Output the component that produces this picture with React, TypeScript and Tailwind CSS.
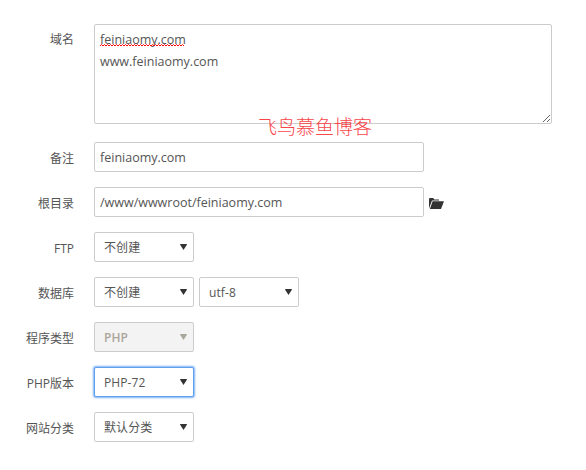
const font = "font-['Open_Sans','Noto_Sans_CJK_SC',sans-serif]";

function Row({ label, children, className = "", labelClass = "pt-[7px]" }: { label: string; children: React.ReactNode; className?: string; labelClass?: string }) {
  return (
    <div className={`flex items-start ${className}`}>
      <label className={`w-[74px] shrink-0 text-right text-[12px] leading-[20px] text-[#555] ${labelClass}`}>{label}</label>
      <div className="ml-[20px] flex items-center gap-[5px]">{children}</div>
    </div>
  );
}

function Select({ value, disabled, focus }: { value: string; disabled?: boolean; focus?: boolean }) {
  return (
    <div className="relative h-[30px] w-[100px]">
      <select
        disabled={disabled}
        defaultValue={value}
        className={`block h-[30px] w-[100px] appearance-none rounded-[2px] border pl-[9px] pt-[1px] text-[12px] tracking-[0.1px] outline-none ${font} ${
          focus
            ? "border-[#5f9ff0] bg-white text-[#555] shadow-[0_0_2px_1px_#7fb2f2]"
            : disabled
              ? "border-[#ccc] bg-[#f3f3f3] font-semibold text-[#aaa69b] opacity-100"
              : "border-[#ccc] bg-white text-[#555]"
        }`}
      >
        <option value={value}>{value}</option>
      </select>
      <svg className="pointer-events-none absolute right-[7px] top-[12px]" width="7" height="6" viewBox="0 0 7 6">
        <path d="M0 0.5 Q0 0 0.5 0 H6.5 Q7 0 7 0.5 L3.5 6Z" fill={disabled ? "#aaa69b" : "#333"} />
      </svg>
    </div>
  );
}

export default function App() {
  return (
    <div className={`relative h-[470px] w-[586px] overflow-hidden bg-white pt-[24px] ${font}`}>
      <Row label="域名" labelClass="pt-[6px]">
        <div className="relative">
          <textarea
            spellCheck={false}
            defaultValue={"feiniaomy.com\nwww.feiniaomy.com"}
            className="block h-[100px] w-[458px] resize rounded-[2px] border border-[#ccc] px-[5px] pb-[3px] pt-[4px] text-[12.5px] leading-[22px] text-[#555] outline-none"
          />
          <svg className="absolute left-[6px] top-[20px]" width="85" height="3" viewBox="0 0 85 3">
            <path
              d="M0 2 L1.5 0.5 L3 2 L4.5 0.5 L6 2 L7.5 0.5 L9 2 L10.5 0.5 L12 2 L13.5 0.5 L15 2 L16.5 0.5 L18 2 L19.5 0.5 L21 2 L22.5 0.5 L24 2 L25.5 0.5 L27 2 L28.5 0.5 L30 2 L31.5 0.5 L33 2 L34.5 0.5 L36 2 L37.5 0.5 L39 2 L40.5 0.5 L42 2 L43.5 0.5 L45 2 L46.5 0.5 L48 2 L49.5 0.5 L51 2 L52.5 0.5 L54 2 L55.5 0.5 L57 2 L58.5 0.5 L60 2 L61.5 0.5 L63 2 L64.5 0.5 L66 2 L67.5 0.5 L69 2 L70.5 0.5 L72 2 L73.5 0.5 L75 2 L76.5 0.5 L78 2 L79.5 0.5 L81 2 L82.5 0.5 L84 2"
              fill="none"
              stroke="#f00"
              strokeWidth="1"
            />
          </svg>
        </div>
      </Row>
      <Row label="备注" className="mt-[18px]">
        <input
          defaultValue="feiniaomy.com"
          className="h-[30px] w-[330px] rounded-[2px] border border-[#ccc] px-[5px] text-[12.5px] text-[#555] outline-none"
        />
      </Row>
      <Row label="根目录" className="mt-[15px]">
        <input
          defaultValue="/www/wwwroot/feiniaomy.com"
          className="h-[30px] w-[330px] rounded-[2px] border border-[#ccc] px-[5px] text-[12.5px] text-[#555] outline-none"
        />
        <svg className="mt-[1px]" width="15" height="12" viewBox="0 0 15 12">
          <path d="M0 11.5 V2 Q0 1 1 1 H4.2 L5.4 2.4 H10 V3.4 H3 L0 11.5Z" fill="#333" />
          <path d="M3.6 4.2 H15 L12 12 H.9Z" fill="#333" />
        </svg>
      </Row>
      <Row label="FTP" className="mt-[15px]">
        <Select value="不创建" />
      </Row>
      <Row label="数据库" className="mt-[15px]">
        <Select value="不创建" />
        <Select value="utf-8" />
      </Row>
      <Row label="程序类型" className="mt-[15px]">
        <Select value="PHP" disabled />
      </Row>
      <Row label="PHP版本" className="mt-[15px]">
        <Select value="PHP-72" focus />
      </Row>
      <Row label="网站分类" className="mt-[15px]">
        <Select value="默认分类" />
      </Row>
      <div className="absolute left-[258px] top-[114px] text-[19px] font-light leading-[26px] text-[#f8454a]">飞鸟慕鱼博客</div>
    </div>
  );
}
